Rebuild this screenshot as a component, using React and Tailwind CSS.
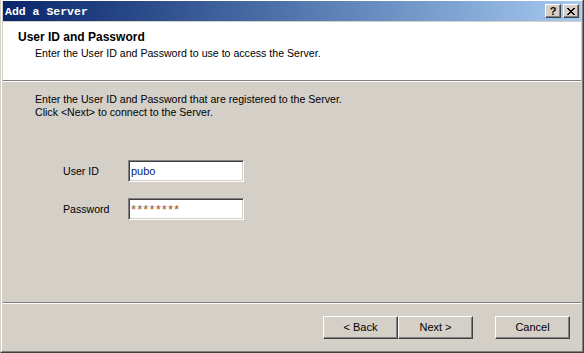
const raised =
  "border border-t-white border-l-white border-r-[#404040] border-b-[#404040] shadow-[inset_-1px_-1px_0_#808080]";
const sunken =
  "border border-t-[#808080] border-l-[#808080] border-r-white border-b-white shadow-[inset_1px_1px_0_#404040,inset_-1px_-1px_0_#d4d0c8]";

const TitleButton = ({ children }) => (
  <div className={`flex h-[14px] w-[16px] items-center justify-center bg-[#d4d0c8] ${raised}`}>
    {children}
  </div>
);

const Field = ({ label, value, secret }) => (
  <div className="flex h-[22px] items-center">
    <span className="w-[65px] leading-[22px] text-black">{label}</span>
    <div className={`flex h-[22px] w-[116px] items-center bg-white pl-[2px] ${sunken}`}>
      {secret ? (
        <span className="text-[13px] leading-none tracking-[1.1px] text-[#a0581c]">{value}</span>
      ) : (
        <span className="text-[11px] text-[#0a1e78]">{value}</span>
      )}
    </div>
  </div>
);

const WizButton = ({ label }) => (
  <button className={`h-[23px] w-[75px] bg-[#d4d0c8] text-[11px] text-black ${raised}`}>
    {label}
  </button>
);

export default function App() {
  return (
    <div
      className="flex h-[353px] w-[584px] flex-col border-b border-l border-r border-b-[#404040] border-l-[#d4d0c8] border-r-[#404040] bg-[#d4d0c8] text-[10.6px]"
      style={{ fontFamily: '"Liberation Sans", Arial, sans-serif' }}
    >
      <div className="flex flex-1 flex-col border border-t-white border-l-white border-r-[#808080] border-b-[#808080] px-px pb-px">
        {/* title bar */}
        <div className="mb-px flex h-[20px] items-center justify-between bg-linear-to-r from-[#0a246a] to-[#a6caf0] pl-[2px] pr-[2px]">
          <span
            className="pt-[2px] text-[11.5px] font-bold text-white"
            style={{ fontFamily: '"Liberation Mono", monospace' }}
          >
            Add a Server
          </span>
          <div className="flex gap-[2px]">
            <TitleButton>
              <span className="text-[11px] font-bold leading-none text-black">?</span>
            </TitleButton>
            <TitleButton>
              <svg width="8" height="7" viewBox="0 0 8 7" shapeRendering="crispEdges">
                <path d="M0 0h2v1H0zM6 0h2v1H6zM1 1h2v1H1zM5 1h2v1H5zM2 2h4v1H2zM3 3h2v1H3zM2 4h4v1H2zM1 5h2v1H1zM5 5h2v1H5zM0 6h2v1H0zM6 6h2v1H6z" fill="#000" />
              </svg>
            </TitleButton>
          </div>
        </div>

        {/* header */}
        <div className="h-[58px] bg-white pl-[15px] pt-[8px]">
          <div className="text-[12px] font-bold leading-[15px] text-black">User ID and Password</div>
          <div className="mt-[2px] pl-[17px] leading-[13px] text-black">
            Enter the User ID and Password to use to access the Server.
          </div>
        </div>
        <div className="h-px bg-[#808080]" />
        <div className="h-px bg-white" />

        {/* body */}
        <div className="flex-1 pl-[32px] pt-[11px]">
          <div className="leading-[13px] text-black">
            <div>Enter the User ID and Password that are registered to the Server.</div>
            <div>Click &lt;Next&gt; to connect to the Server.</div>
          </div>
          <div className="mt-[41px] flex flex-col gap-[16px] pl-[28px]">
            <Field label="User ID" value="pubo" />
            <Field label="Password" value="********" secret />
          </div>
        </div>

        <div className="h-px bg-[#808080]" />
        <div className="h-px bg-white" />

        {/* buttons */}
        <div className="flex h-[46px] justify-end pr-[11px] pt-[12px]">
          <WizButton label="< Back" />
          <WizButton label="Next >" />
          <div className="ml-[22px]">
            <WizButton label="Cancel" />
          </div>
        </div>
      </div>
    </div>
  );
}
